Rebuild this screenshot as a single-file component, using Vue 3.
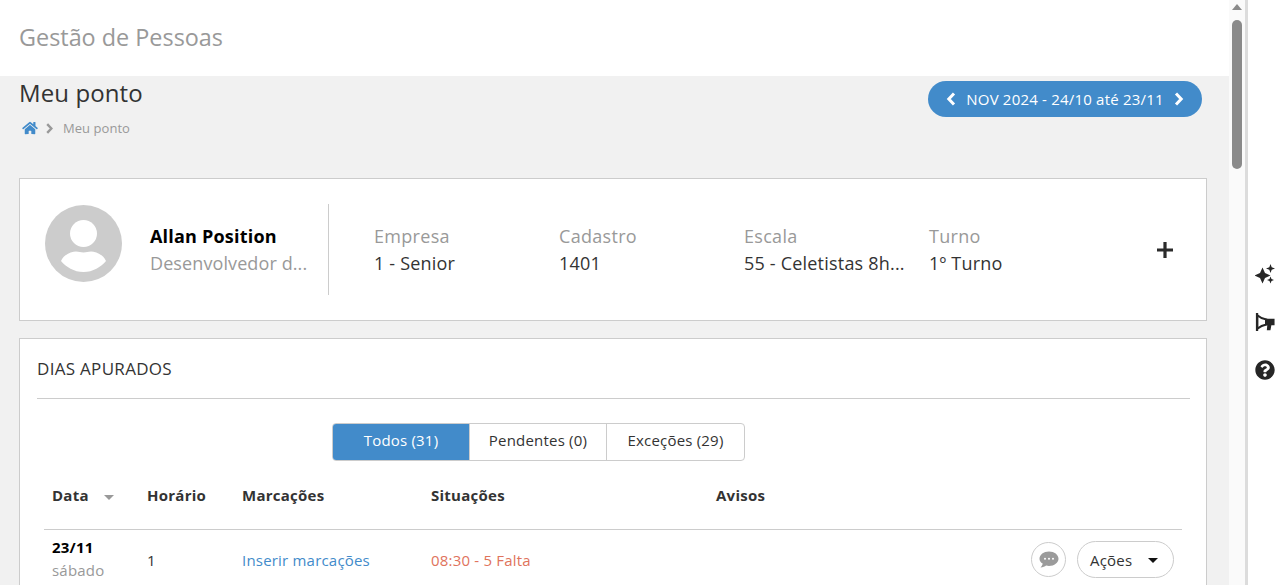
<script setup>
const tabs = [
  { label: 'Todos (31)', active: true, width: '136px' },
  { label: 'Pendentes (0)', active: false, width: '137px' },
  { label: 'Exceções (29)', active: false, width: '138px' },
]
const fields = [
  { label: 'Empresa', value: '1 - Senior' },
  { label: 'Cadastro', value: '1401' },
  { label: 'Escala', value: '55 - Celetistas 8h...' },
  { label: 'Turno', value: '1º Turno' },
]
</script>

<template>
  <div class="shell">
    <main class="main">
      <header class="topbar">Gestão de Pessoas</header>
      <div class="content">
        <div class="page-head">
          <div>
            <h1 class="page-title">Meu ponto</h1>
            <nav class="crumbs">
              <svg class="home" viewBox="0 0 576 512"><path fill="#428bca" d="M280.37 148.26L96 300.11V464a16 16 0 0 0 16 16l112.06-.29a16 16 0 0 0 15.92-16V368a16 16 0 0 1 16-16h64a16 16 0 0 1 16 16v95.64a16 16 0 0 0 16 16.05L464 480a16 16 0 0 0 16-16V300L295.67 148.26a12.19 12.19 0 0 0-15.3 0zM571.6 251.47L488 182.56V44.05a12 12 0 0 0-12-12h-56a12 12 0 0 0-12 12v72.61L318.47 43a48 48 0 0 0-61 0L4.34 251.47a12 12 0 0 0-1.6 16.9l25.5 31A12 12 0 0 0 45.15 301l235.22-193.74a12.19 12.19 0 0 1 15.3 0L530.9 301a12 12 0 0 0 16.9-1.6l25.5-31a12 12 0 0 0-1.7-16.93z"/></svg>
              <svg class="crumb-sep" viewBox="0 0 8 12"><path d="M1.5 1.200 6 6l-4.500 4.800" fill="none" stroke="#999" stroke-width="2.600"/></svg>
              <span>Meu ponto</span>
            </nav>
          </div>
          <div class="period">
            <svg class="period-arrow" viewBox="0 0 10 14"><path d="M8 1.500 2.800 7 8 12.500" fill="none" stroke="#fff" stroke-width="3"/></svg>
            <span>NOV 2024 - 24/10 até 23/11</span>
            <svg class="period-arrow" viewBox="0 0 10 14"><path d="M2 1.500 7.200 7 2 12.500" fill="none" stroke="#fff" stroke-width="3"/></svg>
          </div>
        </div>

        <section class="card profile">
          <svg class="avatar" viewBox="0 0 77 77">
            <circle cx="38.500" cy="38.500" r="38.500" fill="#ccc"/>
            <circle cx="38.500" cy="28.500" r="13.500" fill="#fff"/>
            <path fill="#fff" d="M16 56c3-7 11-9.500 15-9.500 3 0 4.500 1 7.500 1s4.500-1 7.500-1c4 0 12 2.500 15 9.500-5 6-13 11-22.500 11S21 62 16 56z"/>
          </svg>
          <div class="person">
            <div class="person-name">Allan Position</div>
            <div class="person-role">Desenvolvedor d...</div>
          </div>
          <div class="fields">
            <div v-for="f in fields" :key="f.label" class="field">
              <div class="field-label">{{ f.label }}</div>
              <div class="field-value">{{ f.value }}</div>
            </div>
          </div>
          <svg class="plus" viewBox="0 0 16 16"><path d="M8 0v16M0 8h16" stroke="#2b2b2b" stroke-width="3.200" fill="none"/></svg>
        </section>

        <section class="card days">
          <h2 class="days-title">DIAS APURADOS</h2>
          <div class="tabs-row">
            <div class="tabs">
              <div v-for="t in tabs" :key="t.label" class="tab" :class="{ active: t.active }" :style="{ width: t.width }">{{ t.label }}</div>
            </div>
          </div>
          <div class="table">
            <div class="thead grid-row">
              <div class="th th-sort">Data <span class="sort-caret"></span></div>
              <div class="th">Horário</div>
              <div class="th">Marcações</div>
              <div class="th">Situações</div>
              <div class="th">Avisos</div>
            </div>
            <div class="tbody grid-row">
              <div>
                <div class="date">23/11</div>
                <div class="weekday">sábado</div>
              </div>
              <div class="cell">1</div>
              <div class="cell link">Inserir marcações</div>
              <div class="cell danger">08:30 - 5 Falta</div>
              <div class="actions">
                <span class="chat">
                  <svg viewBox="0 0 20 17" width="20" height="17">
                    <path fill="#9b9b9b" d="M10 .5c5.300 0 9.500 3.200 9.500 7.200s-4.200 7.200-9.500 7.200c-1 0-2-.1-2.900-.4C5.800 15.600 4 16.400 1.500 16.500c1.300-1.200 2-2.600 2.200-3.900C1.700 11.400.5 9.700.5 7.700.5 3.700 4.700.5 10 .5z"/>
                    <circle cx="6" cy="7.700" r="1" fill="#fff"/><circle cx="10" cy="7.700" r="1" fill="#fff"/><circle cx="14" cy="7.700" r="1" fill="#fff"/>
                  </svg>
                </span>
                <span class="acoes">Ações <span class="caret"></span></span>
              </div>
            </div>
          </div>
        </section>
      </div>
    </main>

    <div class="scrollbar">
      <span class="scroll-up"></span>
      <span class="scroll-thumb"></span>
    </div>

    <aside class="rail">
      <svg class="rail-icon" viewBox="0 0 20 20">
        <path fill="#262626" d="M7.500 3.500 10 9l5.500 2.500L10 14l-2.500 5.500L5 14-.5 11.500 5 9z"/>
        <path fill="#262626" d="M15.500 0l1.200 3.300L20 4.500l-3.300 1.200L15.500 9l-1.200-3.300L11 4.500l3.300-1.200zM15.500 12.500l1 2.500 2.500 1-2.500 1-1 2.500-1-2.500-2.500-1 2.500-1z"/>
      </svg>
      <svg class="rail-icon" viewBox="0 0 22 20">
        <path fill="#fff" stroke="#262626" stroke-width="2.200" d="M2.500 2.500c3.500 3 7 4.300 10 4.800v5.400c-3 .5-6.500 1.800-10 4.800z"/>
        <path fill="#262626" d="M1 0h2.500v20H1zM11 6.500h10.500v7H18l-1 5.500h-4l.5-5.500H11z"/>
      </svg>
      <svg class="rail-icon" viewBox="0 0 512 512"><path fill="#262626" d="M504 256c0 136.997-111.043 248-248 248S8 392.997 8 256C8 119.083 119.043 8 256 8s248 111.083 248 248zM262.655 90c-54.497 0-89.255 22.957-116.549 63.758-3.536 5.286-2.353 12.415 2.715 16.258l34.699 26.310c5.205 3.947 12.621 3.008 16.665-2.122 17.864-22.658 30.113-35.797 57.303-35.797 20.429 0 45.698 13.148 45.698 32.958 0 14.976-12.363 22.667-32.534 33.976C247.128 238.528 216 254.941 216 296v4c0 6.627 5.373 12 12 12h56c6.627 0 12-5.373 12-12v-1.333c0-28.462 83.186-29.647 83.186-106.667 0-58.002-60.165-102-116.531-102zM256 338c-25.365 0-46 20.635-46 46 0 25.364 20.635 46 46 46s46-20.636 46-46c0-25.365-20.635-46-46-46z"/></svg>
    </aside>
  </div>
</template>

<style>
html, body { margin: 0; overflow: hidden; background: #fff; }
</style>

<style scoped>
* { box-sizing: border-box; }
.shell {
  display: flex;
  width: 1278px;
  height: 585px;
  overflow: hidden;
  font-family: "Open Sans", sans-serif;
  color: #333;
}
.main { width: 1229px; flex: none; background: #f1f1f1; }
.topbar {
  height: 76px;
  background: #fff;
  padding: 0 19px;
  font-size: 23.4px;
  line-height: 74px;
  color: #999;
}
.content { padding: 0 22px 0 19px; }
.page-head { display: flex; justify-content: space-between; height: 102px; }
.page-title {
  margin: 0;
  font-size: 24px;
  font-weight: 400;
  letter-spacing: .1px;
  line-height: 34px;
  color: #333;
}
.crumbs {
  display: flex;
  align-items: center;
  height: 16px;
  margin-top: 10px;
  padding-left: 3px;
  font-size: 13px;
  letter-spacing: .05px;
  color: #999;
}
.home { width: 16px; height: 14px; }
.crumb-sep { width: 9px; height: 11px; margin: 0 9px 0 7px; }
.period {
  display: flex;
  align-items: center;
  justify-content: center;
  gap: 10px;
  width: 274px;
  height: 36px;
  margin: 5px 5px 0 0;
  border-radius: 18px;
  background: #428bca;
  color: #fff;
  font-size: 15px;
  letter-spacing: .2px;
}
.period-arrow { width: 10px; height: 14px; }
.card { background: #fff; border: 1px solid #ccc; }
.profile {
  display: flex;
  align-items: flex-start;
  height: 143px;
  padding: 0 33px 0 25px;
  margin-bottom: 17px;
}
.avatar { width: 77px; height: 77px; flex: none; margin: 26px 28px 0 0; }
.person {
  width: 179px;
  height: 91px;
  flex: none;
  display: flex;
  flex-direction: column;
  justify-content: center;
  border-right: 1px solid #ccc;
  margin-top: 25px;
}
.person-name { font-size: 18px; font-weight: 700; letter-spacing: .2px; line-height: 27px; color: #000; }
.person-role { font-size: 18px; letter-spacing: .1px; line-height: 26px; color: #999; }
.fields { display: flex; flex: 1; padding-left: 45px; }
.field { width: 185px; margin-top: 44px; }
.field-label { font-size: 18px; letter-spacing: .3px; line-height: 27px; color: #999; }
.field-value { font-size: 18px; letter-spacing: .2px; line-height: 26px; color: #333; }
.plus { width: 16px; height: 16px; flex: none; margin-top: 63px; }
.days { height: 320px; padding: 0 16px 0 17px; }
.days-title {
  margin: 0;
  height: 60px;
  border-bottom: 1px solid #ccc;
  font-size: 17px;
  font-weight: 400;
  letter-spacing: .3px;
  line-height: 59px;
  color: #333;
}
.tabs-row { display: flex; padding: 24px 0 0 295px; }
.tabs {
  display: flex;
  height: 38px;
  border: 1px solid #ccc;
  border-radius: 4px;
  overflow: hidden;
}
.tab {
  display: flex;
  align-items: center;
  justify-content: center;
  padding-bottom: 5px;
  font-size: 15px;
  letter-spacing: .2px;
  color: #333;
  border-left: 1px solid #ccc;
}
.tab:first-child { border-left: 0; }
.tab.active { background: #428bca; color: #fff; }
.table { margin: 0 8px 0 7px; }
.grid-row {
  display: grid;
  grid-template-columns: 95px 95px 189px 285px 1fr;
  padding-left: 8px;
  padding-right: 8px;
}
.thead {
  height: 69px;
  align-items: center;
  border-bottom: 1px solid #ccc;
}
.th { font-size: 15px; font-weight: 700; letter-spacing: .25px; color: #333; }
.th-sort { display: flex; align-items: center; }
.sort-caret {
  display: inline-block;
  width: 0;
  height: 0;
  margin: 4px 0 0 15px;
  border-left: 5px solid transparent;
  border-right: 5px solid transparent;
  border-top: 5px solid #999;
}
.tbody { padding-top: 6px; align-items: center; font-size: 15px; letter-spacing: .2px; }
.date { font-size: 15px; font-weight: 700; line-height: 22px; color: #000; }
.weekday { font-size: 15px; line-height: 25px; color: #999; }
.cell { line-height: 20px; }
.link { color: #428bca; }
.danger { color: #e0735c; }
.actions { display: flex; align-items: center; justify-content: flex-end; gap: 11px; }
.chat {
  display: flex;
  align-items: center;
  justify-content: center;
  width: 35px;
  height: 35px;
  border: 1px solid #ccc;
  border-radius: 50%;
}
.acoes {
  display: flex;
  align-items: center;
  width: 97px;
  height: 37px;
  padding-left: 12px;
  border: 1px solid #ccc;
  border-radius: 19px;
  font-size: 15px;
  color: #333;
}
.caret {
  width: 0;
  height: 0;
  margin: 2px 0 0 16px;
  border-left: 5px solid transparent;
  border-right: 5px solid transparent;
  border-top: 5px solid #111;
}
.scrollbar {
  position: relative;
  width: 16px;
  flex: none;
  background: #fafafa;
}
.scroll-up {
  position: absolute;
  left: 3px;
  top: 4px;
  width: 0;
  height: 0;
  border-left: 5px solid transparent;
  border-right: 5px solid transparent;
  border-bottom: 6px solid #8a8a8a;
}
.scroll-thumb {
  position: absolute;
  left: 3px;
  top: 20px;
  width: 10px;
  height: 149px;
  border-radius: 5px;
  background: #8a8a8a;
}
.rail {
  flex: 1;
  border-left: 3px solid #dcdcdc;
  display: flex;
  flex-direction: column;
  align-items: center;
  padding: 264px 0 0 3px;
  gap: 28px;
  background: #fff;
}
.rail-icon { width: 20px; height: 20px; }
</style>
